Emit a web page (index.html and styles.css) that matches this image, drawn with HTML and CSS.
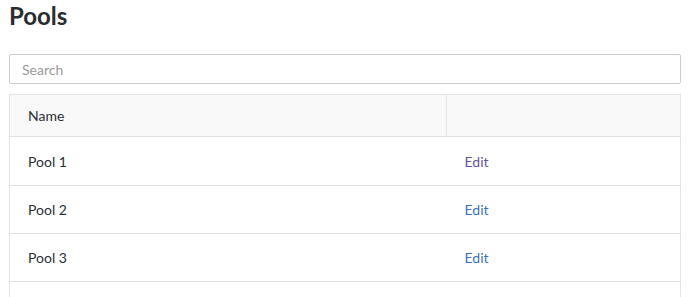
FILE: index.html
```html
<!DOCTYPE html>
<html>
<head>
<meta charset="utf-8">
<link rel="stylesheet" href="styles.css">
</head>
<body>
<div class="page">
  <h1 class="title">Pools</h1>
  <input class="search" type="text" placeholder="Search">
  <table class="pools">
    <thead>
      <tr><th class="col-name">Name</th><th class="col-act"></th></tr>
    </thead>
    <tbody>
      <tr><td>Pool 1</td><td><a class="edit visited" href="#">Edit</a></td></tr>
      <tr><td>Pool 2</td><td><a class="edit" href="#">Edit</a></td></tr>
      <tr><td>Pool 3</td><td><a class="edit" href="#">Edit</a></td></tr>
      <tr class="partial"><td></td><td></td></tr>
    </tbody>
  </table>
</div>
</body>
</html>
```
FILE: styles.css
```css
html, body {
  margin: 0;
  padding: 0;
  background: #fff;
  overflow: hidden;
}
.page {
  padding: 2px 7px 0 9px;
  font-family: Lato, "Open Sans", sans-serif;
  color: #2f3438;
}
.title {
  margin: 0;
  font-size: 24px;
  line-height: 28px;
  font-weight: 700;
  color: #2a2d30;
}
.search {
  display: block;
  box-sizing: border-box;
  width: 100%;
  height: 30px;
  margin: 24px 0 10px;
  padding: 0 12px;
  border: 1px solid #cccccc;
  border-radius: 2px;
  font-family: Lato, "Open Sans", sans-serif;
  font-size: 14px;
  color: #333;
  outline: none;
}
.search::placeholder {
  color: #9a9a9a;
}
.pools {
  width: 100%;
  border-collapse: collapse;
  border: 1px solid #e3e3e3;
  font-size: 14px;
}
.pools th {
  background: #f9f9f9;
  height: 41px;
  padding: 0 18px;
  text-align: left;
  font-weight: 400;
  border-bottom: 1px solid #e0e0e0;
  color: #2a2f35;
}
.col-name {
  width: 400px;
  border-right: 1px solid #e6e6e6;
}
.pools td {
  height: 47px;
  padding: 0 18px;
  border-bottom: 1px solid #e0e0e0;
  color: #2a2f35;
}
.pools tbody tr:first-child td {
  height: 48px;
}
.edit {
  color: #3d6fc2;
  text-decoration: none;
}
.edit.visited {
  color: #5f55a6;
}
```
